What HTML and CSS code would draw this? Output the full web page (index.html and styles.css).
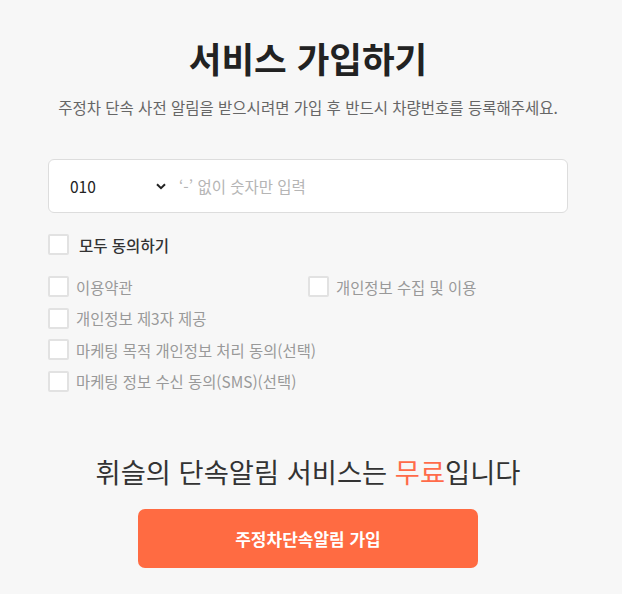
FILE: index.html
```html
<!DOCTYPE html>
<html lang="ko">
<head>
<meta charset="utf-8">
<link rel="stylesheet" href="styles.css">
</head>
<body>
<main class="page">
  <h1 class="title">서비스 가입하기</h1>
  <p class="subtitle">주정차 단속 사전 알림을 받으시려면 가입 후 반드시 차량번호를 등록해주세요.</p>

  <div class="phone">
    <div class="prefix">
      <span>010</span>
      <svg class="chev" width="10" height="7" viewBox="0 0 10 7"><path d="M1 1.2 L5 5.2 L9 1.2" fill="none" stroke="#222" stroke-width="2"/></svg>
    </div>
    <span class="placeholder">‘-’ 없이 숫자만 입력</span>
  </div>

  <label class="all">
    <span class="box"></span>
    <span>모두 동의하기</span>
  </label>

  <div class="terms">
    <label class="term"><span class="box"></span><span>이용약관</span></label>
    <label class="term"><span class="box"></span><span>개인정보 수집 및 이용</span></label>
    <label class="term wide"><span class="box"></span><span>개인정보 제3자 제공</span></label>
    <label class="term wide"><span class="box"></span><span>마케팅 목적 개인정보 처리 동의(선택)</span></label>
    <label class="term wide"><span class="box"></span><span>마케팅 정보 수신 동의(SMS)(선택)</span></label>
  </div>

  <p class="free">휘슬의 단속알림 서비스는 <em>무료</em>입니다</p>
  <button class="submit">주정차단속알림 가입</button>
</main>
</body>
</html>
```

FILE: styles.css
```css
html, body {
  margin: 0;
  padding: 0;
  background: #f7f7f7;
}
body {
  font-family: "Noto Sans CJK KR", "Noto Sans", sans-serif;
  color: #222;
}
.page {
  width: 520px;
  margin-left: 48px;
  padding-top: 34px;
  display: flex;
  flex-direction: column;
}
.title {
  margin: 0;
  text-align: center;
  font-size: 35.5px;
  font-weight: 700;
  line-height: 48px;
  color: #222;
}
.subtitle {
  margin: 14px 0 0;
  text-align: center;
  font-size: 15.5px;
  line-height: 22px;
  color: #666;
  white-space: nowrap;
}
.phone {
  margin-top: 41px;
  height: 52px;
  background: #fff;
  border: 1px solid #ddd;
  border-radius: 6px;
  display: flex;
  align-items: center;
  font-size: 15.5px;
}
.prefix {
  width: 96px;
  padding-left: 21px;
  padding-right: 13px;
  display: flex;
  align-items: center;
  justify-content: space-between;
  color: #222;
}
.placeholder {
  color: #b5b5b5;
}
.all {
  margin-top: 21px;
  display: flex;
  align-items: center;
  gap: 10px;
  font-size: 15.5px;
  font-weight: 500;
  color: #333;
  height: 21px;
}
.box {
  width: 17px;
  height: 17px;
  border: 2px solid #e2e2e2;
  background: #fff;
  border-radius: 2px;
  flex: none;
}
.terms {
  margin-top: 21px;
  display: grid;
  grid-template-columns: 260px 1fr;
  row-gap: 10.67px;
}
.term {
  display: flex;
  align-items: center;
  gap: 7px;
  height: 21px;
  font-size: 15.4px;
  color: #999;
}
.term.wide {
  grid-column: 1 / -1;
}
.free {
  margin: 61px 0 0;
  text-align: center;
  font-size: 27.3px;
  line-height: 36px;
  color: #333;
  white-space: nowrap;
}
.free em {
  font-style: normal;
  color: #ff6b4a;
}
.submit {
  align-self: center;
  margin-top: 20px;
  width: 340px;
  height: 59px;
  border: none;
  border-radius: 7px;
  background: #ff6b42;
  color: #fff;
  font-family: inherit;
  font-size: 17px;
  font-weight: 700;
}
```
